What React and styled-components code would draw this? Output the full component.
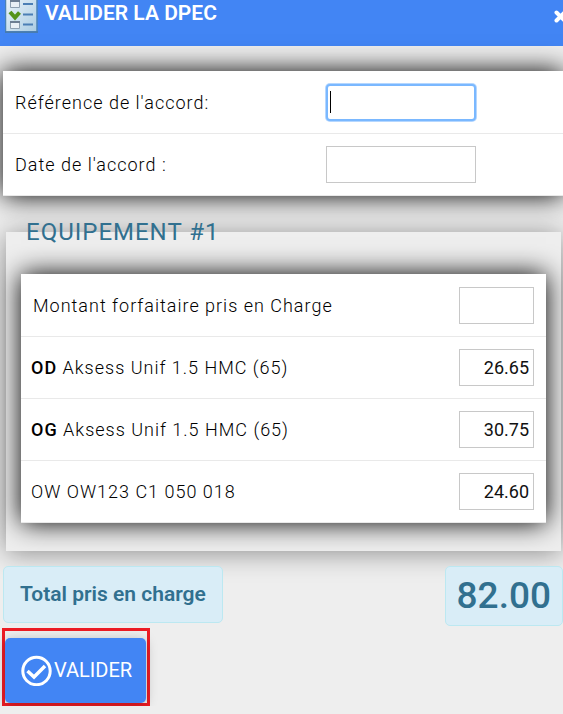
import React, { useState } from "react";
import styled, { createGlobalStyle } from "styled-components";

const GlobalStyle = createGlobalStyle`
  * {
    box-sizing: border-box;
  }

  body {
    margin: 0;
    background-color: #eee;
    color: #000;
    font-family: Roboto, "Liberation Sans", sans-serif;
    font-size: 18px;
    overflow-x: hidden;
  }
`;

const Header = styled.header`
  display: flex;
  align-items: flex-start;
  gap: 7px;
  height: 46px;
  padding-left: 5px;
  background-color: #4285f4;
  color: #fff;
  overflow: hidden;
`;

const HeaderTitle = styled.h1`
  flex: 1;
  margin: 0;
  font-size: 21px;
  font-weight: 600;
  line-height: 26px;
`;

const CloseButton = styled.button`
  display: flex;
  margin: 0 -4px 0 0;
  padding: 10px 0 0;
  border: none;
  background: none;
  color: inherit;
  cursor: pointer;
`;

const Card = styled.div`
  padding-top: 1px;
  background-color: #fff;
  box-shadow: 0 0 25px #000;
`;

const ReferenceCard = styled(Card)`
  margin: 25px 0 0 3px;
`;

const Row = styled.div`
  display: grid;
  grid-template-columns: ${(props) => props.$columns || "5fr 4fr"};
  align-items: center;
  border-bottom: 1px solid #e9e9e9;
`;

const Label = styled.label`
  padding-left: ${(props) => (props.$tight ? "10px" : "12px")};
  font-weight: 300;
  letter-spacing: 1px;
  line-height: 24px;
`;

const Eye = styled.b`
  font-weight: 500;
`;

const Cell = styled.div`
  padding: 12px;
`;

const Input = styled.input`
  display: block;
  width: ${(props) => (props.$small ? "75px" : "150px")};
  height: 37px;
  padding: 0 4px;
  border: 1px solid #c8c8c8;
  background-color: #fff;
  color: #111;
  font-family: inherit;
  font-size: 18px;
  text-align: ${(props) => (props.$small ? "right" : "left")};

  &:focus {
    border: 2px solid #7ab8ff;
    border-radius: 4px;
    outline: none;
    box-shadow: 0 0 0 1px #b5d7ff;
    padding: 0 2px;
    caret-color: #000;
  }

  &:focus:placeholder-shown {
    background: linear-gradient(#000, #000) 2px 5px / 1px 22px no-repeat #fff;
    caret-color: transparent;
  }
`;

const Equipment = styled.fieldset`
  min-width: 0;
  margin: 18px 2px 0 6px;
  padding: 24px 15px 28px;
  border: none;
  background-color: #eee;
  box-shadow: 0 2px 25px rgba(0, 0, 0, 0.4);
`;

const Legend = styled.legend`
  padding: 0 5px;
  color: #31708f;
  font-size: 24px;
  letter-spacing: 1px;
  line-height: 36px;
`;

const Totals = styled.div`
  display: flex;
  justify-content: space-between;
  align-items: flex-start;
  margin: 15px 0 0 3px;
`;

const InfoBox = styled.div`
  padding: ${(props) => (props.$large ? "0 11px" : "0 16px")};
  border: 1px solid #bce8f1;
  border-radius: 5px;
  background-color: #d9edf7;
  color: #31708f;
  font-size: ${(props) => (props.$large ? "37px" : "21px")};
  font-weight: ${(props) => (props.$large ? 500 : 600)};
  line-height: ${(props) => (props.$large ? "58px" : "55px")};
`;

const Highlight = styled.div`
  width: fit-content;
  margin: 2px 0 0 2px;
  padding: 7px 1px 0 0;
  border: 3px solid #ed1c24;
`;

const SubmitButton = styled.button`
  display: flex;
  align-items: center;
  gap: 2px;
  height: 65px;
  padding: 0 14px 2px 16px;
  border: none;
  border-radius: 5px;
  background-color: #4285f4;
  box-shadow: 0 2px 12px rgba(0, 0, 0, 0.25);
  color: #fff;
  font-family: inherit;
  font-size: 20px;
  cursor: pointer;
`;

const ChecklistIcon = () => (
  <svg width="33" height="33" viewBox="0 0 33 33" aria-hidden="true">
    <defs>
      <linearGradient id="sheet" x1="0" y1="0" x2="1" y2="1">
        <stop offset="0" stopColor="#edf5fa" />
        <stop offset="1" stopColor="#a9cbe2" />
      </linearGradient>
    </defs>
    <path d="M0.5 -2H32V32H0.5Z" fill="url(#sheet)" stroke="#4c83b5" strokeWidth="1.5" />
    <path d="M0 32H33" stroke="#4678aa" strokeWidth="1.5" />
    <g fill="#e8eff5" stroke="#8d9fb0">
      <path d="M5.5 -1.5H14.5V7.5H5.5Z" />
      <path d="M5.5 21.5H14.5V28.5H5.5Z" />
    </g>
    <path d="M5 1H15M5 22H15" stroke="#6b7d92" strokeWidth="2" />
    <path d="M5 12L10 17.5L14.5 12.5" fill="none" stroke="#55941a" strokeWidth="4" />
    <path
      d="M18 4H28M18 14.5H28M18 24.5H28"
      stroke="#4b7fb5"
      strokeWidth="2"
    />
  </svg>
);

const CloseIcon = () => (
  <svg width="13" height="13" viewBox="0 0 13 13" aria-hidden="true">
    <path
      d="M2.5 2.5L10.5 10.5M10.5 2.5L2.5 10.5"
      stroke="currentColor"
      strokeWidth="4"
      strokeLinecap="round"
    />
  </svg>
);

const CheckCircleIcon = () => (
  <svg width="31" height="33" viewBox="0 0 31 33" fill="none" aria-hidden="true">
    <circle cx="15.5" cy="18" r="13.7" stroke="currentColor" strokeWidth="3" />
    <path d="M6.5 18L13 24L24 13" stroke="currentColor" strokeWidth="3.5" />
  </svg>
);

const equipmentLines = [
  { id: "forfait", label: "Montant forfaitaire pris en Charge", amount: "" },
  { id: "od", eye: "OD", label: "Aksess Unif 1.5 HMC (65)", amount: "26.65" },
  { id: "og", eye: "OG", label: "Aksess Unif 1.5 HMC (65)", amount: "30.75" },
  { id: "monture", label: "OW OW123 C1 050 018", amount: "24.60" },
];

const App = () => {
  const [lines, setLines] = useState(equipmentLines);

  const handleAmountChange = (id, amount) => {
    setLines(lines.map((line) => (line.id === id ? { ...line, amount } : line)));
  };

  const total = lines.reduce((sum, line) => sum + (Number(line.amount) || 0), 0);

  return (
    <>
      <GlobalStyle />
      <Header>
        <ChecklistIcon />
        <HeaderTitle>VALIDER LA DPEC</HeaderTitle>
        <CloseButton type="button" aria-label="Fermer">
          <CloseIcon />
        </CloseButton>
      </Header>
      <form onSubmit={(e) => e.preventDefault()}>
        <ReferenceCard>
          <Row>
            <Label htmlFor="reference">Référence de l'accord:</Label>
            <Cell>
              <Input id="reference" type="text" placeholder=" " autoFocus />
            </Cell>
          </Row>
          <Row>
            <Label htmlFor="date">Date de l'accord :</Label>
            <Cell>
              <Input id="date" type="text" />
            </Cell>
          </Row>
        </ReferenceCard>

        <Equipment>
          <Legend>EQUIPEMENT #1</Legend>
          <Card>
            {lines.map((line) => (
              <Row key={line.id} $columns="1fr auto">
                <Label htmlFor={line.id} $tight={line.id !== "forfait"}>
                  {line.eye && <Eye>{line.eye}</Eye>} {line.label}
                </Label>
                <Cell>
                  <Input
                    id={line.id}
                    type="text"
                    $small
                    value={line.amount}
                    onChange={(e) => handleAmountChange(line.id, e.target.value)}
                  />
                </Cell>
              </Row>
            ))}
          </Card>
        </Equipment>

        <Totals>
          <InfoBox>Total pris en charge</InfoBox>
          <InfoBox $large>{total.toFixed(2)}</InfoBox>
        </Totals>

        <Highlight>
          <SubmitButton type="submit">
            <CheckCircleIcon />
            VALIDER
          </SubmitButton>
        </Highlight>
      </form>
    </>
  );
};

export default App;
